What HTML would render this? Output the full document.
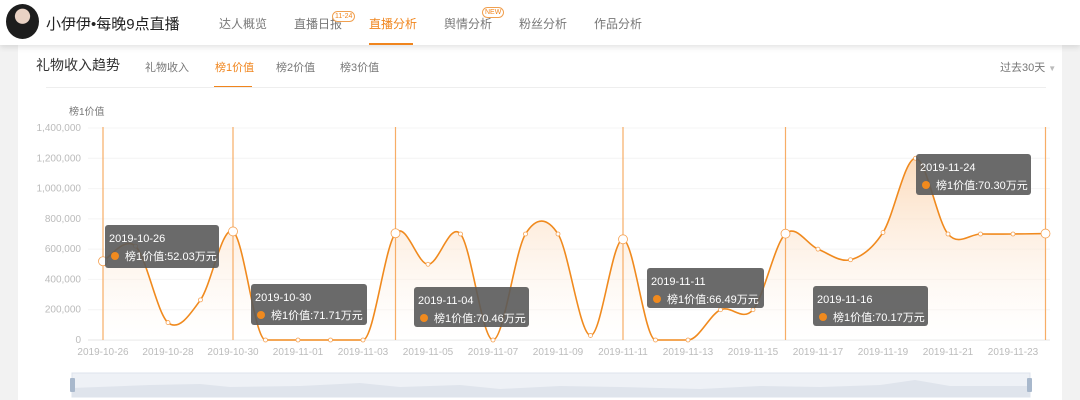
<!DOCTYPE html>
<html><head><meta charset="utf-8"><style>
*{margin:0;padding:0;box-sizing:border-box}
body{width:1080px;height:400px;overflow:hidden;background:#f2f2f2;font-family:"Liberation Sans","Noto Sans CJK SC",sans-serif;position:relative}
.hdr{position:absolute;left:0;top:0;width:1080px;height:45px;background:#fff;box-shadow:0 2px 6px rgba(0,0,0,.12);z-index:5}
.av{position:absolute;left:6px;top:4px;width:33px;height:35px;border-radius:50%;background:radial-gradient(circle at 50% 35%,#e9d2c4 0 26%,#1d1d1d 28%);}
.name{position:absolute;left:46px;top:13px;font-size:15px;color:#222}
.nav{position:absolute;top:15px;font-size:12px;color:#777}
.nav.act{color:#f0851d}
.uline{position:absolute;left:292px;top:43px;width:35px;height:2px;background:#f0851d}
.badge{position:absolute;border:1px solid #f0a050;color:#f0851d;font-size:7px;border-radius:6px;background:#fff;padding:0 2px;line-height:9px}
.card{position:absolute;left:18px;top:45px;width:1044px;height:355px;background:#fff}
.t{position:absolute;font-size:11px;color:#777;white-space:nowrap}
.tip{position:absolute;background:rgba(90,90,90,.9);border-radius:3px;color:#fff;font-size:11px;padding:5px 0 0 4px;line-height:18px;white-space:nowrap;overflow:hidden}
.tip i{display:inline-block;width:8px;height:8px;border-radius:50%;background:#f08a1e;margin:0 6px 0 2px}
</style></head><body>
<div class="hdr">
<div class="av"></div>
<div class="name">小伊伊•每晚9点直播</div>
<div class="nav" style="left:219px">达人概览</div>
<div class="nav" style="left:294px">直播日报</div>
<div class="badge" style="left:332px;top:11px">11-24</div>
<div class="nav act" style="left:369px">直播分析</div>
<div class="uline" style="left:369px;width:44px"></div>
<div class="nav" style="left:444px">舆情分析</div>
<div class="badge" style="left:482px;top:7px">NEW</div>
<div class="nav" style="left:519px">粉丝分析</div>
<div class="nav" style="left:594px">作品分析</div>
</div>
<div class="card">
<div class="t" style="left:18px;top:10px;font-size:14px;color:#333">礼物收入趋势</div>
<div class="t" style="left:127px;top:14px">礼物收入</div>
<div class="t" style="left:197px;top:14px;color:#f0851d">榜1价值</div>
<div style="position:absolute;left:196px;top:41px;width:38px;height:2px;background:#f0851d"></div>
<div class="t" style="left:258px;top:14px">榜2价值</div>
<div class="t" style="left:322px;top:14px">榜3价值</div>
<div class="t" style="left:982px;top:14px;font-size:11px">过去30天 <span style="font-size:8px;color:#bbb">▼</span></div>
<div style="position:absolute;left:28px;top:42px;width:1000px;height:1px;background:#eee"></div>
</div>
<svg style="position:absolute;left:0;top:0" width="1080" height="400" id="s">
<defs><linearGradient id="g" x1="0" y1="0" x2="0" y2="1"><stop offset="0" stop-color="#fbd3ad" stop-opacity=".8"/><stop offset="1" stop-color="#fff" stop-opacity=".3"/></linearGradient></defs>
<text x="69" y="115" font-size="10" fill="#777">榜1价值</text>
<g id="ax" font-size="10" fill="#bbb" text-anchor="end"></g>
<path id="area" fill="url(#g)"/>
<g id="vl" stroke="#f7ad66" stroke-width="1.2"></g>
<path id="line" fill="none" stroke="#f08a1e" stroke-width="1.6"/>
<g id="pts" fill="#fff" stroke="#f5a050" stroke-width="0.8"></g>
<g id="xl" font-size="10" fill="#bbb" text-anchor="middle"></g>
<rect x="72" y="373" width="958" height="24" fill="#eef1f6" stroke="#dde3ec"/>
<path d="M72 388 L150 385 L200 384 L230 387 L300 386 L360 383 L400 387 L460 385 L500 389 L560 386 L620 387 L700 389 L760 386 L820 387 L880 385 L915 380 L950 386 L1030 386 L1030 397 L72 397Z" fill="#dfe4ec"/>
<rect x="70" y="378" width="5" height="14" rx="1" fill="#a8b8cc"/><rect x="1027" y="378" width="5" height="14" rx="1" fill="#a8b8cc"/>
</svg>
<div class="tip" style="left:105px;top:225px;width:114px;height:43px">2019-10-26<br><i></i>榜1价值:52.03万元</div>
<div class="tip" style="left:251px;top:284px;width:116px;height:41px">2019-10-30<br><i></i>榜1价值:71.71万元</div>
<div class="tip" style="left:414px;top:287px;width:115px;height:40px">2019-11-04<br><i></i>榜1价值:70.46万元</div>
<div class="tip" style="left:647px;top:268px;width:117px;height:40px">2019-11-11<br><i></i>榜1价值:66.49万元</div>
<div class="tip" style="left:813px;top:286px;width:115px;height:40px">2019-11-16<br><i></i>榜1价值:70.17万元</div>
<div class="tip" style="left:916px;top:154px;width:115px;height:41px">2019-11-24<br><i></i>榜1价值:70.30万元</div>
<script>
var v=[520,620,115,265,717,0,0,0,0,705,500,700,0,700,700,30,665,0,0,200,200,702,600,530,710,1200,700,700,700,703];
var X=i=>103+i*32.5, Y=k=>340-k*212/1400;
var ns='http://www.w3.org/2000/svg';
function el(p,t,a,txt){var e=document.createElementNS(ns,t);for(var k in a)e.setAttribute(k,a[k]);if(txt)e.textContent=txt;document.getElementById(p).appendChild(e);}
for(var k=0;k<=1400;k+=200){el('ax','text',{x:81,y:Y(k)+3},k?(k*1000).toLocaleString('en-US'):'0');el('ax','line',{x1:88,x2:1050,y1:Y(k),y2:Y(k),stroke:k?'#f4f4f4':'#e6e6e6'});}
var p=v.map((k,i)=>[X(i),Y(k)]);
var d='M'+p[0], C=y=>Math.min(340,y);
for(var i=0;i<p.length-1;i++){var a=p[i-1]||p[i],b=p[i],c=p[i+1],e=p[i+2]||c;
var y1=C(b[1]+(c[1]-a[1])/6), y2=C(c[1]-(e[1]-b[1])/6);
if(b[1]>=340)y1=340; if(c[1]>=340)y2=340;
d+=' C'+(b[0]+(c[0]-a[0])/6)+','+y1+' '+(c[0]-(e[0]-b[0])/6)+','+y2+' '+c;}
document.getElementById('line').setAttribute('d',d);
document.getElementById('area').setAttribute('d',d+' L'+X(29)+',340 L103,340Z');
[0,4,9,16,21,29].forEach(i=>el('vl','line',{x1:X(i),x2:X(i),y1:127,y2:340}));
p.forEach((q,i)=>el('pts','circle',{cx:q[0],cy:q[1],r:[0,4,9,16,21,29].indexOf(i)>=0?4.5:2}));
var dt=['10-26','10-28','10-30','11-01','11-03','11-05','11-07','11-09','11-11','11-13','11-15','11-17','11-19','11-21','11-23'];
dt.forEach((s,j)=>el('xl','text',{x:X(j*2),y:355},'2019-'+s));
</script>
</body></html>
